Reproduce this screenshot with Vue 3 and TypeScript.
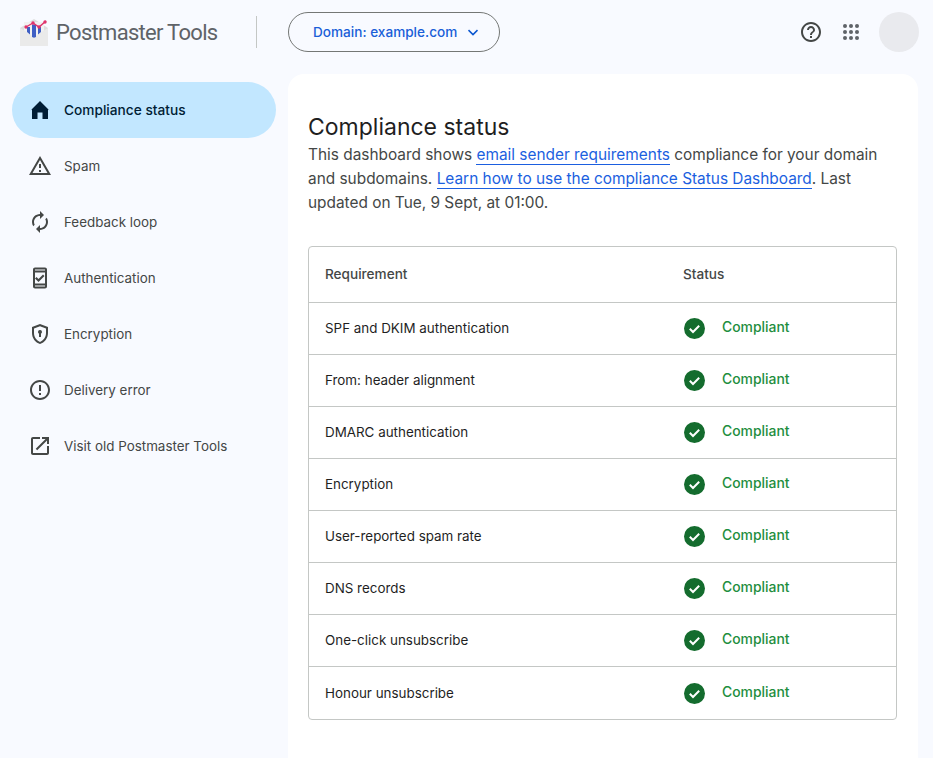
<script setup lang="ts">
const navItems = [
  { label: 'Compliance status', icon: 'home', active: true },
  { label: 'Spam', icon: 'warning' },
  { label: 'Feedback loop', icon: 'sync' },
  { label: 'Authentication', icon: 'phone' },
  { label: 'Encryption', icon: 'shield' },
  { label: 'Delivery error', icon: 'error' },
  { label: 'Visit old Postmaster Tools', icon: 'open' },
]

const icons: Record<string, string> = {
  home: 'M4 21v-9.500L2.500 12.500 12 3l9.500 9.500-1.500-1V21h-5.500v-6.500h-5V21z',
  warning: 'M12 5.990 19.530 19H4.470L12 5.990M12 2 1 21h22L12 2zm1 14h-2v2h2v-2zm0-6h-2v4h2v-4z',
  sync: 'M12 4V1l4 4-4 4V6c-3.310 0-6 2.690-6 6 0 1.010.25 1.970.7 2.800l-1.460 1.460C4.460 15.030 4 13.570 4 12c0-4.420 3.580-8 8-8zm0 14c3.310 0 6-2.690 6-6 0-1.010-.25-1.970-.7-2.800l1.460-1.460C19.540 8.970 20 10.430 20 12c0 4.420-3.580 8-8 8v3l-4-4 4-4v3z',
  phone: 'M17 1.500H7c-1.100 0-2 .9-2 2v17c0 1.100.9 2 2 2h10c1.100 0 2-.9 2-2v-17c0-1.100-.9-2-2-2zM17 20.500H7v-1h10v1zM17 17.500H7v-11h10v11zM7 4.500v-1h10v1H7zM16.500 10 15 8.500l-4.500 4.500-2-2L7 12.500l3.500 3.500z',
  shield: 'M12 2 4 5v6.090c0 5.050 3.410 9.760 8 10.910 4.590-1.150 8-5.860 8-10.910V5l-8-3zm6 9.090c0 4-2.550 7.700-6 8.830-3.450-1.130-6-4.820-6-8.830v-4.700l6-2.250 6 2.250v4.700zM12 8a2 2 0 0 0-1 3.730V15h2v-3.270A2 2 0 0 0 12 8z',
  error: 'M11 15h2v2h-2zm0-8h2v6h-2zm.99-5C6.470 2 2 6.480 2 12s4.470 10 9.990 10C17.520 22 22 17.520 22 12S17.520 2 11.990 2zM12 20c-4.420 0-8-3.580-8-8s3.580-8 8-8 8 3.580 8 8-3.580 8-8 8z',
  open: 'M19 19H5V5h7V3H5c-1.110 0-2 .9-2 2v14c0 1.100.89 2 2 2h14c1.100 0 2-.9 2-2v-7h-2v7zM14 3v2h3.590l-9.830 9.830 1.410 1.410L19 6.410V10h2V3h-7z',
}

const requirements = [
  'SPF and DKIM authentication',
  'From: header alignment',
  'DMARC authentication',
  'Encryption',
  'User-reported spam rate',
  'DNS records',
  'One-click unsubscribe',
  'Honour unsubscribe',
]

const dots = [6, 12, 18]
</script>

<template>
  <div class="page">
    <header class="topbar">
      <div class="brand">
        <svg class="logo" width="28" height="27" viewBox="0 0 28 27">
          <path d="M0 9 14 0l14 9v18H0z" fill="#dedede" />
          <rect x="4" y="3" width="20" height="15" fill="#f1f1f1" />
          <path d="M0 9 14 18l14-9v18H0z" fill="#eaeaea" />
          <path d="M7 8h3v7.500L7 13zM12 5.500h4V18l-2 .8-2-.8zM18 8h3v5l-3 2.500z" fill="#3f5fc4" />
          <path d="M6 8 13 4 19 8 26 2" fill="none" stroke="#e0336b" stroke-width="1.400" />
          <circle cx="6" cy="8" r="1.700" fill="#e0336b" />
          <circle cx="13" cy="4" r="1.700" fill="#e0336b" />
          <circle cx="19" cy="8" r="1.700" fill="#e0336b" />
          <circle cx="25" cy="3" r="1.700" fill="#e0336b" />
        </svg>
        <span class="brand-name">Postmaster Tools</span>
      </div>
      <div class="divider"></div>
      <button class="domain">
        <span>Domain: example.com</span>
        <svg width="18" height="18" viewBox="0 0 24 24">
          <path d="M6 9.500 12 15.500 18 9.500" fill="none" stroke="#0b57d0" stroke-width="2" />
        </svg>
      </button>
      <div class="actions">
        <svg class="help" width="24" height="24" viewBox="0 0 24 24">
          <path fill="#444746" d="M11 18h2v-2h-2v2zm1-16C6.480 2 2 6.480 2 12s4.480 10 10 10 10-4.480 10-10S17.520 2 12 2zm0 18c-4.410 0-8-3.590-8-8s3.590-8 8-8 8 3.590 8 8-3.590 8-8 8zm0-14c-2.210 0-4 1.790-4 4h2c0-1.100.9-2 2-2s2 .9 2 2c0 2-3 1.750-3 5h2c0-2.250 3-2.500 3-5 0-2.210-1.790-4-4-4z" />
        </svg>
        <svg class="apps" width="24" height="24" viewBox="0 0 24 24">
          <template v-for="y in dots" :key="y">
            <circle v-for="x in dots" :key="x" :cx="x" :cy="y" r="2" fill="#5f6368" />
          </template>
        </svg>
        <div class="avatar"></div>
      </div>
    </header>

    <div class="body">
      <nav class="sidebar">
        <a v-for="item in navItems" :key="item.label" class="nav-item" :class="{ active: item.active }">
          <svg width="24" height="24" viewBox="0 0 24 24">
            <path :d="icons[item.icon]" fill="currentColor" />
          </svg>
          <span>{{ item.label }}</span>
        </a>
      </nav>

      <main class="card">
        <h1>Compliance status</h1>
        <p class="intro">
          This dashboard shows <a>email sender requirements</a> compliance for your domain and subdomains.
          <a>Learn how to use the compliance Status Dashboard</a>. Last updated on Tue, 9 Sept, at 01:00.
        </p>

        <div class="table">
          <div class="row head">
            <div class="col-req">Requirement</div>
            <div class="col-status">Status</div>
          </div>
          <div v-for="req in requirements" :key="req" class="row">
            <div class="col-req">{{ req }}</div>
            <div class="col-status status">
              <svg width="21" height="21" viewBox="0 0 21 21">
                <circle cx="10.500" cy="10.500" r="10.500" fill="#146c2e" />
                <path d="M5.800 10.800 9 14l6.200-6.200" fill="none" stroke="#fff" stroke-width="2" />
              </svg>
              <span>Compliant</span>
            </div>
          </div>
        </div>
      </main>
    </div>
  </div>
</template>

<style>
html,
body {
  margin: 0;
  background: #f8faff;
}
</style>

<style scoped>
.page {
  height: 758px;
  overflow: hidden;
  background: #f8faff;
  font-family: Inter, Roboto, "Liberation Sans", sans-serif;
  color: #1f1f1f;
}

.topbar {
  display: flex;
  align-items: center;
  height: 64px;
  padding: 0 14px 0 20px;
}

.brand {
  display: flex;
  align-items: center;
  gap: 8px;
  width: 236px;
}

.brand-name {
  font-family: Roboto, sans-serif;
  font-size: 22px;
  letter-spacing: -0.7px;
  color: #5f6368;
}

.divider {
  width: 1px;
  height: 32px;
  background: #c4c7c5;
}

.domain {
  display: flex;
  align-items: center;
  justify-content: space-between;
  width: 212px;
  height: 40px;
  box-sizing: border-box;
  margin-left: 31px;
  padding: 0 17px 0 24px;
  border: 1px solid #747775;
  border-radius: 20px;
  background: transparent;
  color: #1a5fd8;
  font-family: inherit;
  font-size: 13.6px;
  font-weight: 500;
}

.actions {
  display: flex;
  align-items: center;
  margin-left: auto;
}

.help {
  margin-right: 16px;
}

.apps {
  margin-right: 16px;
}

.avatar {
  width: 40px;
  height: 40px;
  border-radius: 50%;
  background: #e9eaee;
}

.body {
  display: flex;
  padding: 10px 15px 0 12px;
}

.sidebar {
  display: flex;
  flex-direction: column;
  flex: none;
  width: 264px;
  margin-top: 8px;
  margin-right: 12px;
}

.nav-item {
  display: flex;
  align-items: center;
  gap: 12px;
  height: 56px;
  padding-left: 16px;
  border-radius: 28px;
  color: #444746;
  font-size: 13.4px;
}

.nav-item.active {
  background: #c2e7ff;
  color: #001d35;
  font-size: 13.7px;
  font-weight: 500;
}

.card {
  flex: 1;
  height: 684px;
  box-sizing: border-box;
  padding: 37px 21px 0 20px;
  border-radius: 16px 16px 0 0;
  background: #fff;
}

h1 {
  margin: 0;
  font-size: 23px;
  font-weight: 400;
  line-height: 32px;
}

.intro {
  margin: 0 0 31px;
  font-size: 15.4px;
  line-height: 24px;
  color: #444746;
}

.intro a {
  color: #1b5fe0;
  border-bottom: 1px solid #1b5fe0;
}

.table {
  border: 1px solid #c4c7c5;
  border-radius: 4px;
}

.row {
  display: flex;
  align-items: center;
  box-sizing: border-box;
  height: 52px;
  padding-bottom: 2px;
  border-top: 1px solid #c4c7c5;
  font-size: 13.4px;
  color: #1f1f1f;
}

.row:last-child {
  height: 53px;
}

.row:last-child .col-req {
  padding-top: 2px;
}

.row.head {
  height: 55px;
  border-top: 0;
  color: #444746;
  font-size: 13.6px;
  font-weight: 500;
}

.col-req {
  width: 374px;
  padding-left: 16px;
  box-sizing: border-box;
  flex: none;
}

.col-status {
  flex: 1;
}

.status {
  display: flex;
  align-items: center;
  gap: 17px;
  padding-left: 1px;
}

.status svg {
  margin-top: 2px;
}

.status span {
  font-size: 13.9px;
  margin-top: -1px;
  color: #1e8e3e;
  font-weight: 500;
}
</style>
